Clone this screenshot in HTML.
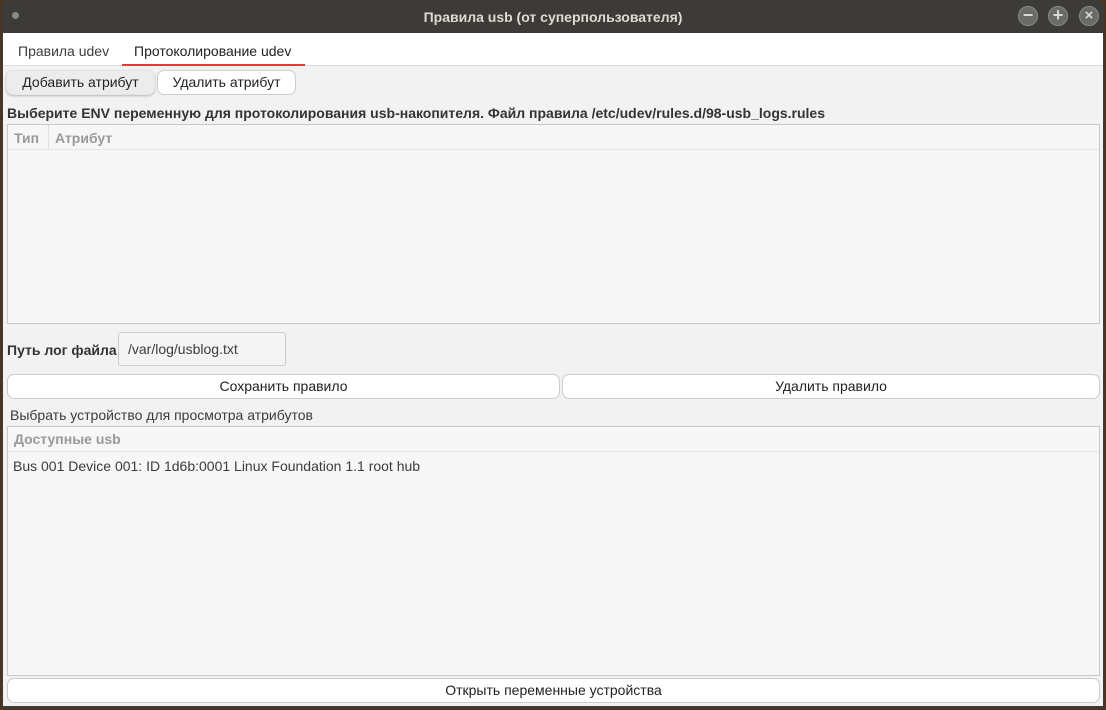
<!DOCTYPE html><html><head><style>
*{box-sizing:border-box;margin:0;padding:0}
body{width:1106px;height:710px;background:#4a3424;font-family:"Liberation Sans","DejaVu Sans",sans-serif;font-size:14px;color:#3c3c3c;position:relative;overflow:hidden}
.win{position:absolute;left:2px;top:0;width:1102px;height:708px;background:#3c3b37;border-radius:6px 6px 0 0;overflow:hidden}
.title{position:absolute;left:0;top:0;width:100%;height:33px;color:#dfdbd2;font-weight:bold;font-size:14px;text-align:center;line-height:34px}
.dot{position:absolute;left:10px;top:12px;width:7px;height:7px;border-radius:50%;background:#8a8a86}
.wb{position:absolute;top:6px;width:20px;height:20px;border-radius:50%;background:#6a6a67;border:1px solid #8a8a86;color:#d8d8d8;font-size:18px;line-height:17px;text-align:center;font-weight:bold}
.body{position:absolute;left:1px;top:33px;width:1100px;height:673px;background:#f2f2f2}
.tabs{position:absolute;left:0;top:0;width:100%;height:33px;background:#fff;border-bottom:1px solid #ddd}
.tab{position:absolute;top:10px;font-size:14px}
.btn{position:absolute;background:#fff;border:1px solid #ccc;border-radius:7px;text-align:center;font-size:14px;color:#222}
.tbl{position:absolute;background:#f7f7f7;border:1px solid #c8c8c8}
.hdr{color:#999;font-weight:bold;font-size:14px}
.lbl{position:absolute;font-size:14px}
</style></head><body>
<div class="win">
<div class="title">Правила usb (от суперпользователя)</div>
<div class="dot"></div>
<div class="wb" style="left:1016px">−</div>
<div class="wb" style="left:1046px">+</div>
<div class="wb" style="left:1077px;font-size:15px">×</div>
<div class="body">
<div class="tabs">
<div class="tab" style="left:15px">Правила udev</div>
<div class="tab" style="left:131px;color:#222">Протоколирование udev</div>
<div style="position:absolute;left:119px;top:31px;width:183px;height:2px;background:#e53935"></div>
</div>
<div class="btn" style="left:3px;top:37px;width:149px;height:25px;line-height:23px;background:#ececec;border-color:#e4e4e4;box-shadow:0 1px 2px rgba(0,0,0,.25)">Добавить атрибут</div>
<div class="btn" style="left:154px;top:37px;width:139px;height:25px;line-height:23px">Удалить атрибут</div>
<div class="lbl" style="left:4px;top:72px;font-weight:bold;color:#333">Выберите ENV переменную для протоколирования usb-накопителя. Файл правила /etc/udev/rules.d/98-usb_logs.rules</div>
<div class="tbl" style="left:4px;top:91px;width:1093px;height:200px">
<div style="height:25px;border-bottom:1px solid #e6e6e6;position:relative">
<span class="hdr" style="position:absolute;left:6px;top:5px">Тип</span>
<div style="position:absolute;left:40px;top:0;width:1px;height:25px;background:#e0e0e0"></div>
<span class="hdr" style="position:absolute;left:47px;top:5px">Атрибут</span></div></div>
<div class="lbl" style="left:4px;top:309px;font-weight:bold;color:#333">Путь лог файла</div>
<div style="position:absolute;left:115px;top:299px;width:168px;height:34px;border:1px solid #ccc;border-radius:3px;background:#f4f4f4;padding:8px 0 0 9px;font-size:14px">/var/log/usblog.txt</div>
<div class="btn" style="left:4px;top:341px;width:553px;height:25px;line-height:23px">Сохранить правило</div>
<div class="btn" style="left:559px;top:341px;width:538px;height:25px;line-height:23px">Удалить правило</div>
<div class="lbl" style="left:7px;top:374px">Выбрать устройство для просмотра атрибутов</div>
<div class="tbl" style="left:4px;top:393px;width:1093px;height:250px">
<div style="height:25px;border-bottom:1px solid #e6e6e6;padding:4px 0 0 6px" class="hdr">Доступные usb</div>
<div style="padding:6px 0 0 5px;font-size:14px">Bus 001 Device 001: ID 1d6b:0001 Linux Foundation 1.1 root hub</div></div>
<div class="btn" style="left:4px;top:645px;width:1093px;height:25px;line-height:23px">Открыть переменные устройства</div>
</div></div>
</body></html>
